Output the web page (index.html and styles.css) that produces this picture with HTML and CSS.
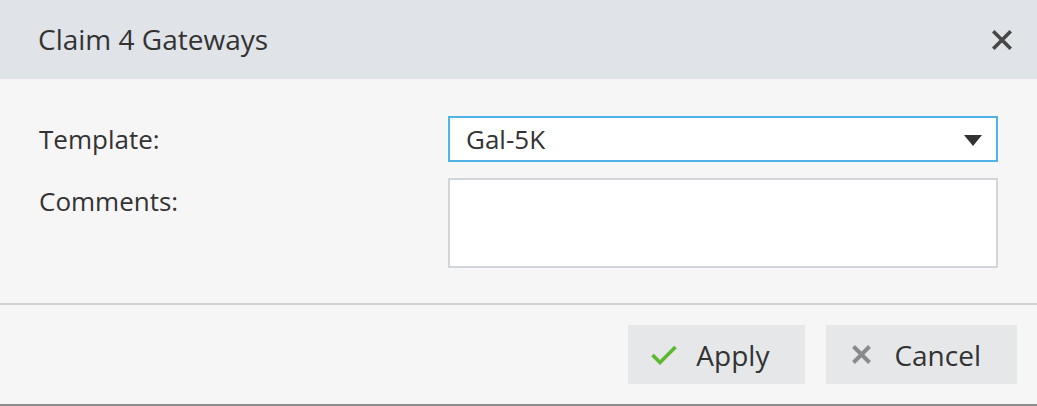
FILE: index.html
```html
<!DOCTYPE html>
<html lang="en">
<head>
<meta charset="utf-8">
<title>Claim 4 Gateways</title>
<link rel="stylesheet" href="styles.css">
</head>
<body>
<div class="dialog">
  <div class="header">
    <h1 class="title">Claim 4 Gateways</h1>
    <button class="close" aria-label="Close">
      <svg width="20" height="20" viewBox="0 0 20 20"><path d="M2.5 2.5 L17.5 17.5 M17.5 2.5 L2.5 17.5" stroke="#474747" stroke-width="3.6" stroke-linecap="square" fill="none"/></svg>
    </button>
  </div>
  <div class="body">
    <div class="form">
      <label class="label label-template">Template:</label>
      <div class="select">
        <span class="select-value">Gal-5K</span>
        <svg class="caret" width="18" height="11" viewBox="0 0 18 11"><path d="M0 0 H18 L9 11 Z" fill="#333"/></svg>
      </div>
      <label class="label label-comments">Comments:</label>
      <div class="textarea"></div>
    </div>
  </div>
  <div class="footer">
    <button class="btn">
      <span class="btn-icon icon-apply">
        <svg width="26" height="20" viewBox="0 0 26 20"><path d="M1.5 10 L9 17.5 L24.5 2" stroke="#5cb82c" stroke-width="3.6" fill="none"/></svg>
      </span>
      <span class="btn-text">Apply</span>
    </button>
    <button class="btn">
      <span class="btn-icon icon-cancel">
        <svg width="21" height="21" viewBox="0 0 21 21"><path d="M2.5 2.5 L18.5 18.5 M18.5 2.5 L2.5 18.5" stroke="#8a8a8a" stroke-width="4" fill="none"/></svg>
      </span>
      <span class="btn-text">Cancel</span>
    </button>
  </div>
</div>
</body>
</html>
```
FILE: styles.css
```css
html, body {
  margin: 0;
  padding: 0;
}
body {
  font-family: "Open Sans", "Liberation Sans", sans-serif;
  color: #333;
  background: #f6f6f6;
}
.dialog {
  width: 1037px;
  height: 406px;
  box-sizing: border-box;
  display: flex;
  flex-direction: column;
  background: #f6f6f6;
  border-bottom: 2px solid #8c8c8c;
}
.header {
  height: 79px;
  flex: none;
  background: #e0e3e8;
  display: flex;
  align-items: center;
  justify-content: space-between;
  padding: 0 25px 0 38px;
}
.title {
  margin: 0;
  font-size: 28px;
  font-weight: 400;
  color: #333;
  line-height: 1;
  padding-bottom: 1px;
}
.close {
  border: 0;
  background: none;
  padding: 0;
  width: 20px;
  height: 20px;
  display: flex;
  margin-top: 1px;
}
.body {
  padding: 37px 39px 35px 39px;
  border-bottom: 2px solid #d0d0d0;
}
.form {
  display: grid;
  grid-template-columns: 409px 550px;
  grid-template-rows: 46px 90px;
  row-gap: 16px;
}
.label {
  font-size: 26px;
  color: #333;
  line-height: 1;
}
.label-template {
  align-self: center;
}
.label-comments {
  padding-top: 10px;
}
.select {
  box-sizing: border-box;
  border: 2px solid #4fb3e8;
  background: #fff;
  display: flex;
  align-items: center;
  justify-content: space-between;
  padding: 0 14px 0 16px;
}
.select-value {
  font-size: 26px;
  line-height: 1;
  color: #333;
}
.caret {
  display: block;
  margin-top: 2px;
}
.textarea {
  box-sizing: border-box;
  border: 2px solid #d2d5d9;
  background: #fff;
}
.footer {
  flex: 1;
  display: flex;
  justify-content: flex-end;
  align-items: flex-start;
  gap: 21px;
  padding: 20px 20px 0 0;
}
.btn {
  height: 59px;
  border: 0;
  background: #e6e7e9;
  display: flex;
  align-items: center;
  padding: 0 36px 0 23px;
  font-family: "Open Sans", "Liberation Sans", sans-serif;
  font-size: 28px;
  color: #333;
  cursor: pointer;
}
.btn-icon {
  display: flex;
}
.icon-apply {
  margin-right: 19px;
}
.icon-cancel {
  margin-left: 2px;
  margin-right: 22px;
}
.btn-text {
  line-height: 1;
}
```
